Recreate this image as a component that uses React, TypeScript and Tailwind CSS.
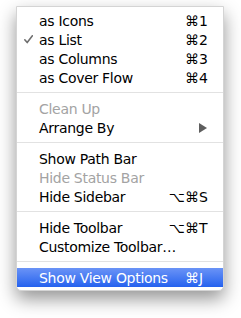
import React from "react";

type Item =
  | { sep: true }
  | {
      sep?: false;
      label: string;
      mods?: string;
      keyName?: string;
      checked?: boolean;
      disabled?: boolean;
      submenu?: boolean;
      active?: boolean;
    };

const items: Item[] = [
  { label: "as Icons", mods: "⌘", keyName: "1" },
  { label: "as List", mods: "⌘", keyName: "2", checked: true },
  { label: "as Columns", mods: "⌘", keyName: "3" },
  { label: "as Cover Flow", mods: "⌘", keyName: "4" },
  { sep: true },
  { label: "Clean Up", disabled: true },
  { label: "Arrange By", submenu: true },
  { sep: true },
  { label: "Show Path Bar" },
  { label: "Hide Status Bar", disabled: true },
  { label: "Hide Sidebar", mods: "⌥⌘", keyName: "S" },
  { sep: true },
  { label: "Hide Toolbar", mods: "⌥⌘", keyName: "T" },
  { label: "Customize Toolbar…" },
  { sep: true },
  { label: "Show View Options", mods: "⌘", keyName: "J", active: true },
];

const Check = () => (
  <svg width="9" height="9" viewBox="0 0 9 9">
    <path
      d="M0.8 4.8 L3.2 7.6 L8.4 0.8"
      fill="none"
      stroke="#6f6f6f"
      strokeWidth="1.6"
      strokeLinecap="round"
      strokeLinejoin="round"
    />
  </svg>
);

const Arrow = () => (
  <svg width="8" height="10" viewBox="0 0 8 10">
    <path d="M0 0 L8 5 L0 10 Z" fill="#5e5e5e" />
  </svg>
);

const MenuRow = ({ item }: { item: Exclude<Item, { sep: true }> }) => {
  const color = item.active
    ? "text-white"
    : item.disabled
      ? "text-[#a3a3a3]"
      : "text-black";
  return (
    <div
      className={`flex h-[19px] items-center leading-none ${color} ${
        item.active ? "bg-gradient-to-b from-[#6a93f6] to-[#2461ee]" : ""
      }`}
    >
      <span className="flex w-[22px] justify-center">
        {item.checked && <Check />}
      </span>
      <span className="flex-1 whitespace-nowrap tracking-[-0.3px]">
        {item.label}
      </span>
      <span className="whitespace-nowrap text-right">{item.mods ?? ""}</span>
      <span className="flex w-[13px] items-center">
        {item.keyName ?? ""}
        {item.submenu && <Arrow />}
      </span>
      <span className="w-[11px]" />
    </div>
  );
};

export default function App() {
  return (
    <div className="h-[318px] w-[241px] overflow-hidden bg-white pl-[16px] pt-[6px]">
      <div
        className="w-[208px] rounded-b-[5px] border border-[#d4d4d4] bg-white pb-[3px] pt-[4px] text-[14px] shadow-[0_8px_18px_rgba(0,0,0,0.42)]"
        style={{ fontFamily: '"Lucida Grande", "DejaVu Sans", sans-serif' }}
      >
        {items.map((item, i) =>
          item.sep ? (
            <div key={i} className="h-[12px] pt-[5px]">
              <div className="h-px bg-[#e2e2e2]" />
            </div>
          ) : (
            <MenuRow key={i} item={item} />
          )
        )}
      </div>
    </div>
  );
}
